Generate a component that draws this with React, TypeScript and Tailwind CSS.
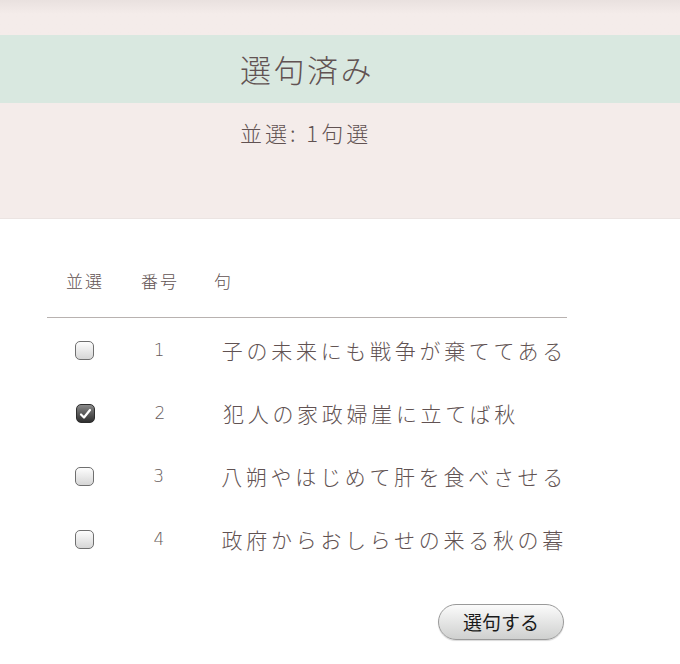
import { useState } from "react";

const ku = [
  "子の未来にも戦争が棄ててある",
  "犯人の家政婦崖に立てば秋",
  "八朔やはじめて肝を食べさせる",
  "政府からおしらせの来る秋の暮",
];

function Check({ on, onClick }: { on: boolean; onClick: () => void }) {
  return (
    <button
      onClick={onClick}
      className={
        on
          ? "flex h-[19px] w-[19px] items-center justify-center rounded-[5px] border border-[#2e2e2e] bg-gradient-to-b from-[#8a8a8a] to-[#2f2f2f]"
          : "h-[19px] w-[19px] rounded-[5px] border border-[#6f6f6f] bg-gradient-to-b from-[#fdfdfd] to-[#d6d6d6]"
      }
    >
      {on && (
        <svg width="13" height="12" viewBox="0 0 13 12">
          <path d="M2 6.5 L5 9.5 L11 2" fill="none" stroke="#fff" strokeWidth="2.2" strokeLinecap="round" strokeLinejoin="round" />
        </svg>
      )}
    </button>
  );
}

export default function App() {
  const [picked, setPicked] = useState<number[]>([1]);

  const toggle = (i: number) =>
    setPicked((p) => (p.includes(i) ? p.filter((x) => x !== i) : [...p, i]));

  return (
    <div
      className="h-[664px] w-[680px] overflow-hidden bg-white text-[#615252]"
      style={{ fontFamily: '"Noto Sans CJK JP", "Noto Sans", sans-serif' }}
    >
      {/* ================= HEADER ================= */}
      <div className="border-b border-[#ebe4e2] bg-[#f4ecea]">
        <div className="h-[35px] bg-gradient-to-b from-[#e9e1df] to-[#f4ecea] to-40%" />
        <div className="flex h-[68px] items-center bg-[#d9e8e0] pl-[240px]">
          <h1 className="text-[31px] font-light tracking-[2.5px]">選句済み</h1>
        </div>
        <div className="h-[115px] pl-[240px] pt-[13px]">
          <p className="text-[22px] font-light tracking-[3px]">並選: 1句選</p>
        </div>
      </div>

      {/* ================= TABLE ================= */}
      <div className="ml-[47px] mt-[47px] w-[520px]">
        <div className="flex h-[52px] items-start border-b border-[#b8b2b0] pt-[2px] text-[17px] font-light tracking-[2px]">
          <div className="w-[76px] text-center">並選</div>
          <div className="w-[74px] text-center">番号</div>
          <div className="pl-[17px]">句</div>
        </div>

        <div className="pt-[1px]">
          {ku.map((k, i) => (
            <div key={i} className="flex h-[63px] items-center">
              <div className="flex w-[76px] justify-center">
                <Check on={picked.includes(i)} onClick={() => toggle(i)} />
              </div>
              <div
                className="w-[74px] text-center text-[17px] text-[#675b5b]"
                style={{ fontFamily: '"DejaVu Sans", sans-serif', fontWeight: 200 }}
              >
                {i + 1}
              </div>
              <div className="pl-[26px] text-[21px] font-light tracking-[3.7px] whitespace-nowrap">{k}</div>
            </div>
          ))}
        </div>

        <div className="mr-[3px] mt-[33px] flex justify-end">
          <button className="h-[36px] w-[126px] rounded-full border border-[#9a9a9a] bg-gradient-to-b from-[#fbfbfb] to-[#cfd0cf] text-[19px] text-[#1a1a1a] shadow-[0_1px_1px_rgba(0,0,0,0.15)]">
            選句する
          </button>
        </div>
      </div>
    </div>
  );
}
